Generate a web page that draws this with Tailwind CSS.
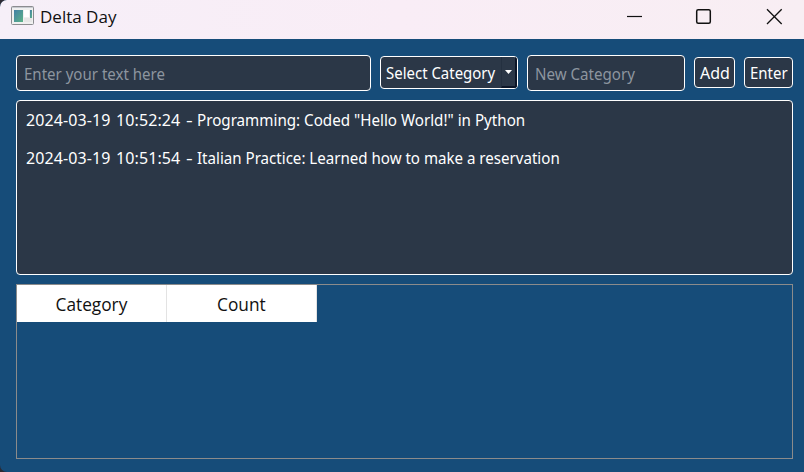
<!DOCTYPE html>
<html lang="en">
<head>
<meta charset="utf-8">
<title>Delta Day</title>
<script src="https://cdn.jsdelivr.net/npm/@tailwindcss/browser@4"></script>
</head>
<body class="bg-[#2c2a33] overflow-hidden">
<div class="w-[804px] h-[472px] flex flex-col bg-[#164c79] rounded-l-[7px] overflow-hidden font-['Noto_Sans',sans-serif] text-[16px] leading-[20px] text-white whitespace-nowrap">
  <header class="h-[39px] shrink-0 flex items-start bg-linear-to-r from-[#f6eff8] via-[#f9edf6] to-[#f8eef3] text-[#111]">
    <svg class="ml-[11px] mt-[6px] shrink-0" width="23" height="19" viewBox="0 0 23 19">
      <defs><linearGradient id="g" x1="0" y1="0" x2="1" y2="1"><stop offset="0" stop-color="#427fa6"/><stop offset="1" stop-color="#5cb387"/></linearGradient></defs>
      <rect x=".5" y=".5" width="22" height="18" rx="1" fill="#f0f0f0" stroke="#8b8c90"/>
      <path d="M1 1.500H22" stroke="#c7cad0"/>
      <rect x="3" y="4" width="9" height="12" fill="url(#g)"/>
      <rect x="13" y="4" width="5" height="7" fill="#fff"/>
      <rect x="19" y="4" width="2" height="8" fill="url(#g)"/>
      <rect x="13" y="12" width="8" height="4" fill="#e6e6e6"/>
    </svg>
    <span class="ml-[6px] mt-[7px] text-[17px] font-['Open_Sans',sans-serif]">Delta Day</span>
    <svg class="ml-auto mr-[21px] mt-[8px] shrink-0" width="157" height="17" viewBox="626 8 157 17" fill="none" stroke="#111" stroke-width="1.200">
      <path d="M627 16.500H642"/>
      <rect x="696.700" y="9.700" width="13.600" height="13.600" rx="1.500" stroke-width="1.500"/>
      <path d="M767 9.300L781.700 24M781.700 9.300L767 24" stroke-width="1.300"/>
    </svg>
  </header>
  <main class="flex flex-col pt-[16px] pl-[16px] pr-[11px]">
    <div class="flex h-[36px] items-start">
      <div class="w-[355px] h-[36px] bg-[#2b3747] border border-white rounded-[4px] pl-[7px] pt-[8px] text-[#8d959f]"><span class="inline-block origin-left scale-x-[0.94]">Enter your text here</span></div>
      <div class="ml-[9px] mt-[1px] w-[138px] h-[33px] flex bg-[#2b3747] border border-white rounded-[4px] overflow-hidden">
        <span class="pl-[5px] pt-[6px] w-[120px] shrink-0"><span class="inline-block origin-left scale-x-[0.935]">Select Category</span></span>
        <span class="flex-1 border-l border-l-[#243040] border-r-2 border-b-2 border-r-[#0c1628] border-b-[#0c1628] pt-[13px] pl-[3px]"><svg width="7" height="4" viewBox="0 0 7 4"><path d="M0 0H7L3.500 4Z" fill="#fff"/></svg></span>
      </div>
      <div class="ml-[9px] w-[158px] h-[36px] bg-[#2b3747] border border-white rounded-[4px] pl-[7px] pt-[8px] text-[#8d959f]"><span class="inline-block origin-left scale-x-[0.945]">New Category</span></div>
      <div class="ml-[9px] mt-[2px] w-[41px] h-[31px] bg-[#2b3747] border border-white rounded-[4px] pt-[5px] pl-[5px]"><span class="inline-block origin-left">Add</span></div>
      <div class="ml-[9px] mt-[2px] w-[49px] h-[31px] bg-[#2b3747] border border-white rounded-[4px] pt-[5px] pl-[5px]"><span class="inline-block origin-left scale-x-[0.935]">Enter</span></div>
    </div>
    <div class="mt-[9px] h-[175px] bg-[#2b3747] border border-white rounded-[4px] pt-[9px] pl-[9px]">
      <div class="h-[38px] flex"><span class="w-[90px] tracking-[0.1px]">2024-03-19</span><span class="w-[70px] tracking-[0.1px]">10:52:24</span><span class="w-[11px]"><span class="inline-block origin-left scale-x-[1.300]">-</span></span><span class="origin-left scale-x-[0.948]">Programming: Coded "Hello World!" in Python</span></div>
      <div class="flex"><span class="w-[90px] tracking-[0.1px]">2024-03-19</span><span class="w-[70px] tracking-[0.1px]">10:51:54</span><span class="w-[11px]"><span class="inline-block origin-left scale-x-[1.300]">-</span></span><span class="origin-left scale-x-[0.943]">Italian Practice: Learned how to make a reservation</span></div>
    </div>
    <div class="mt-[9px] h-[175px] border border-[#8b8b8b]">
      <div class="flex w-[300px] h-[37px] bg-white text-[#111] text-[18px] font-['Open_Sans',sans-serif] text-center leading-[39px]">
        <div class="w-[150px] border-r border-[#e3e3e3]"><span class="inline-block scale-x-[0.96]">Category</span></div>
        <div class="w-[150px] border-r border-[#e3e3e3]"><span class="inline-block scale-x-[0.96]">Count</span></div>
      </div>
    </div>
  </main>
</div>
</body>
</html>
